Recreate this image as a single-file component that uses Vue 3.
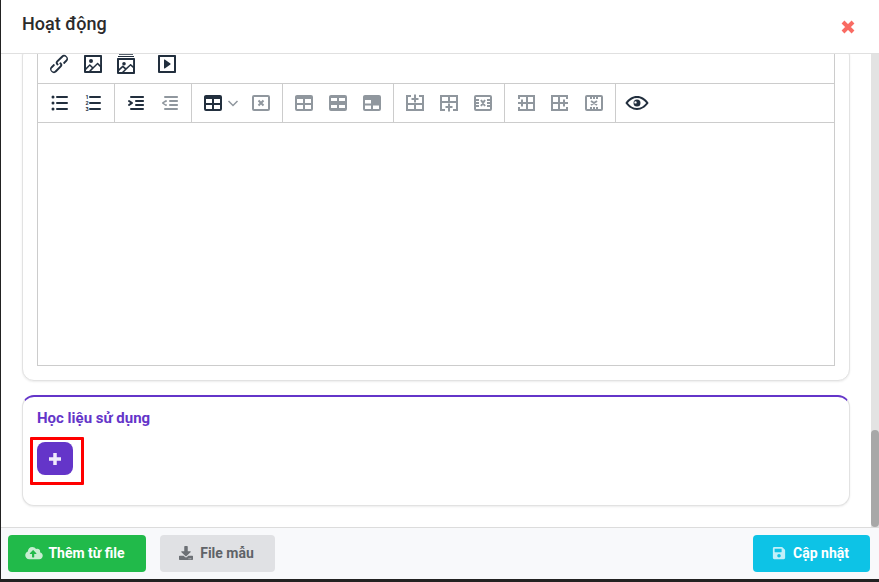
<script setup>
const tableD = 'M19 4a2 2 0 0 1 2 2v12a2 2 0 0 1-2 2H5a2 2 0 0 1-2-2V6c0-1.1.9-2 2-2h14zm0 10h-6v4h6v-4zm-8 0H5v4h6v-4zm8-6h-6v4h6V8zm-8 0H5v4h6V8z'
const solid = 'M5 4h14a2 2 0 0 1 2 2v12a2 2 0 0 1-2 2H5a2 2 0 0 1-2-2V6c0-1.1.9-2 2-2z'
const box = 'M5 5h14a1 1 0 0 1 1 1v12a1 1 0 0 1-1 1H5a1 1 0 0 1-1-1V6a1 1 0 0 1 1-1z'
const I = {
  link: { f: 'M6.2 12.3a1 1 0 0 1 1.4 1.4l-2 2a2 2 0 1 0 2.6 2.8l4.8-4.8a1 1 0 0 0 0-1.4 1 1 0 1 1 1.4-1.3 2.9 2.9 0 0 1 0 4L9.6 20a3.9 3.9 0 0 1-5.5-5.5l2-2zm11.6-.6a1 1 0 0 1-1.4-1.4l2-2a2 2 0 1 0-2.6-2.8L11 10a1 1 0 0 0 0 1.4 1 1 0 1 1-1.4 1.3 2.9 2.9 0 0 1 0-4L14.4 4a3.9 3.9 0 0 1 5.5 5.5l-2 2z' },
  image: { f: 'M5 15.7l3.3-3.2c.3-.3.7-.3 1 0L12 15l4.1-4c.3-.4.8-.4 1 0l2 1.9V5H5v10.7zM5 18v1h3l2.8-2.9-2-2L5 17.9zm14-3l-2.5-2.4-6.4 6.5H19v-4zM4 3h16c.6 0 1 .4 1 1v16c0 .6-.4 1-1 1H4a1 1 0 0 1-1-1V4c0-.6.4-1 1-1zm6 8a2 2 0 1 1 0-4 2 2 0 0 1 0 4z' },
  gallery: { f: 'M5 16.7l3.3-3c.3-.3.7-.3 1 0l2.7 2.4 4.1-3.8c.3-.4.8-.4 1 0l2 1.8V8H5v8.7zM5 19v1h3l2.8-2.7-2-1.9L5 19zm14-3l-2.5-2.3-6.4 6.3H19v-4zM4 6h16c.6 0 1 .4 1 1v14c0 .6-.4 1-1 1H4a1 1 0 0 1-1-1V7c0-.6.4-1 1-1zm6 7.5a1.8 1.8 0 1 1 0-3.6 1.8 1.8 0 0 1 0 3.6zM5 1.7h14v1.1H5zM4 3.9h16V5H4z' },
  media: { f: 'M4 3h16c.6 0 1 .4 1 1v16c0 .6-.4 1-1 1H4a1 1 0 0 1-1-1V4c0-.6.4-1 1-1zm1 2v14h14V5H5zm4.8 2.6l5.6 4a.5.5 0 0 1 0 .8l-5.6 4A.5.5 0 0 1 9 16V8a.5.5 0 0 1 .8-.4z' },
  ul: { f: 'M10 5h10a1 1 0 0 1 0 2H10a1 1 0 0 1 0-2zm0 6h10a1 1 0 0 1 0 2H10a1 1 0 0 1 0-2zm0 6h10a1 1 0 0 1 0 2H10a1 1 0 0 1 0-2zM6 4.500a1.500 1.500 0 1 1 0 3 1.500 1.500 0 0 1 0-3zm0 6a1.500 1.500 0 1 1 0 3 1.500 1.500 0 0 1 0-3zm0 6a1.500 1.500 0 1 1 0 3 1.500 1.500 0 0 1 0-3z' },
  ol: { f: 'M9 5h10a1 1 0 0 1 0 2H9a1 1 0 0 1 0-2zm0 6h10a1 1 0 0 1 0 2H9a1 1 0 0 1 0-2zm0 6h10a1 1 0 0 1 0 2H9a1 1 0 0 1 0-2z', digits: true },
  indent: { f: 'M7 5h12c.6 0 1 .4 1 1s-.4 1-1 1H7a1 1 0 1 1 0-2zm5 4h7c.6 0 1 .4 1 1s-.4 1-1 1h-7a1 1 0 0 1 0-2zm0 4h7c.6 0 1 .4 1 1s-.4 1-1 1h-7a1 1 0 0 1 0-2zm-5 4h12a1 1 0 0 1 0 2H7a1 1 0 0 1 0-2zm-2.6-3.8L6.2 12l-1.8-1.2a1 1 0 0 1 1.2-1.6l3 2a1 1 0 0 1 0 1.6l-3 2a1 1 0 1 1-1.2-1.6z' },
  outdent: { f: 'M7 5h12c.6 0 1 .4 1 1s-.4 1-1 1H7a1 1 0 1 1 0-2zm5 4h7c.6 0 1 .4 1 1s-.4 1-1 1h-7a1 1 0 0 1 0-2zm0 4h7c.6 0 1 .4 1 1s-.4 1-1 1h-7a1 1 0 0 1 0-2zm-5 4h12a1 1 0 0 1 0 2H7a1 1 0 0 1 0-2zm1.6-3.8a1 1 0 0 1-1.2 1.6l-3-2a1 1 0 0 1 0-1.6l3-2a1 1 0 0 1 1.2 1.6L5.8 12l1.8 1.2z' },
  table: { f: tableD },
  tdel: { s: box + 'M9.500 9.500l5 5M14.500 9.500l-5 5' },
  tcell: { f: tableD },
  trow: { f: solid + 'M5 7h6v3H5zM13 7h6v3h-6zM5 14h6v3H5zM13 14h6v3h-6z' },
  tprop: { f: solid + 'M5 9h6v3.500H5zM5 14.500h6V18H5zM13 14.500h6V18h-6z' },
  rowB: { s: 'M8 5H4v14h16V5h-4M4 13h16M12 13v6M12 3.500v8M8.500 8h7' },
  rowA: { s: 'M8 19H4V5h16v14h-4M4 11h16M12 5v6M12 12.500v8M8.500 16h7' },
  rowD: { s: box + 'M4 9h4M16 9h4M4 15h4M16 15h4M4 12h4M16 12h4M10 9l4 6M14 9l-4 6' },
  colB: { s: 'M5 8V5h15v14H5v-3M13 5v14M13 12h7M4 12h8M8 8.500v7' },
  colA: { s: 'M19 8V5H4v14h15v-3M11 5v14M4 12h7M12 12h8M16 8.500v7' },
  colD: { s: box + 'M9 5v3M15 5v3M9 16v3M15 16v3M12 5v3M12 16v3M9 10l6 4M15 10l-6 4' },
  eye: { f: 'M12 5c4.700 0 8.500 2.700 11.300 6.400a1 1 0 0 1 0 1.200C20.500 16.300 16.700 19 12 19S3.500 16.300.7 12.600a1 1 0 0 1 0-1.200C3.500 7.700 7.300 5 12 5zm0 2c-3.700 0-6.900 2-9.200 5 2.300 3 5.500 5 9.200 5s6.900-2 9.200-5c-2.300-3-5.500-5-9.200-5zm0 1.500a3.500 3.500 0 1 1 0 7 3.500 3.500 0 0 1 0-7zm-1.500 1.700a1.200 1.200 0 1 0 0 2.400 1.200 1.200 0 0 0 0-2.400z' }
}
const rowOne = [
  [{ k: 'link' }, { k: 'image' }, { k: 'gallery', nudge: true }],
  [{ k: 'media' }]
]
const rowTwo = [
  [{ k: 'ul' }, { k: 'ol' }],
  [{ k: 'indent' }, { k: 'outdent', off: true }],
  [{ k: 'table', split: true }, { k: 'tdel', off: true }],
  [{ k: 'tcell', off: true }, { k: 'trow', off: true }, { k: 'tprop', off: true }],
  [{ k: 'rowB', off: true }, { k: 'rowA', off: true }, { k: 'rowD', off: true }],
  [{ k: 'colB', off: true }, { k: 'colA', off: true }, { k: 'colD', off: true }],
  [{ k: 'eye' }]
]
const toolbars = [
  { cls: 'bar-one', groups: rowOne },
  { cls: 'bar-two', groups: rowTwo }
]
</script>

<template>
  <div class="page">
    <div class="modal">
      <header class="head">
        <h1 class="title">Hoạt động</h1>
        <svg class="close" width="14" height="14" viewBox="0 0 14 14" aria-hidden="true">
          <path d="M2 2l10 10M12 2L2 12" />
        </svg>
      </header>

      <div class="body">
        <main class="scroll">
          <section class="card card-editor">
            <div class="editor">
              <div v-for="bar in toolbars" :key="bar.cls" class="bar" :class="bar.cls">
                <div v-for="(group, gi) in bar.groups" :key="gi" class="group">
                  <span v-for="b in group" :key="b.k" class="tool" :class="{ off: b.off, split: b.split, nudge: b.nudge }">
                    <svg width="24" height="24" viewBox="0 0 24 24" aria-hidden="true">
                      <path v-if="I[b.k].f" class="fill" :d="I[b.k].f" />
                      <path v-if="I[b.k].s" class="line" :d="I[b.k].s" />
                      <template v-if="I[b.k].digits">
                        <text class="digit" x="4.500" y="8">1</text>
                        <text class="digit" x="4.500" y="14">2</text>
                        <text class="digit" x="4.500" y="20">3</text>
                      </template>
                    </svg>
                    <svg v-if="b.split" class="chev" width="12" height="24" viewBox="0 0 12 24" aria-hidden="true">
                      <path d="M1.500 10l4.500 4.500L10.500 10" />
                    </svg>
                  </span>
                </div>
              </div>
              <div class="area"></div>
            </div>
          </section>

          <section class="card card-files">
            <h2 class="sub">Học liệu sử dụng</h2>
            <div class="mark">
              <button class="add" type="button" aria-label="Thêm">
                <svg width="12" height="12" viewBox="0 0 12 12" aria-hidden="true">
                  <path d="M6 0v12M0 6h12" />
                </svg>
              </button>
            </div>
          </section>
        </main>
        <div class="track"><div class="thumb"></div></div>
      </div>

      <footer class="foot">
        <button class="btn green" type="button">
          <svg width="18" height="14" viewBox="0 0 640 512" aria-hidden="true"><path d="M537.6 226.6c4.100-10.700 6.400-22.400 6.400-34.600 0-53-43-96-96-96-19.700 0-38.100 6-53.300 16.200C367 64.200 315.300 32 256 32c-88.400 0-160 71.600-160 160 0 2.700.1 5.400.2 8.100C40.200 219.800 0 273.200 0 336c0 79.500 64.500 144 144 144h368c70.700 0 128-57.300 128-128 0-61.900-44-113.600-102.400-125.400zM393.400 288H328v112c0 8.800-7.200 16-16 16h-48c-8.800 0-16-7.200-16-16V288h-65.400c-14.300 0-21.400-17.200-11.300-27.300l105.400-105.400c6.200-6.200 16.400-6.200 22.600 0l105.400 105.400c10.100 10.100 2.900 27.300-11.300 27.300z" /></svg>
          Thêm từ file
        </button>
        <button class="btn gray" type="button">
          <svg width="14" height="14" viewBox="0 0 512 512" aria-hidden="true"><path d="M216 0h80c13.300 0 24 10.700 24 24v168h87.700c17.800 0 26.700 21.500 14.100 34.100L269.700 378.300c-7.500 7.500-19.800 7.500-27.300 0L90.100 226.100c-12.600-12.600-3.700-34.100 14.100-34.100H192V24c0-13.300 10.700-24 24-24zm296 376v112c0 13.300-10.700 24-24 24H24c-13.300 0-24-10.700-24-24V376c0-13.300 10.700-24 24-24h146.700l49 49c20.100 20.100 52.500 20.100 72.600 0l49-49H488c13.300 0 24 10.700 24 24zm-124 88c0-11-9-20-20-20s-20 9-20 20 9 20 20 20 20-9 20-20zm64 0c0-11-9-20-20-20s-20 9-20 20 9 20 20 20 20-9 20-20z" /></svg>
          File mẫu
        </button>
        <button class="btn cyan" type="button">
          <svg width="14" height="14" viewBox="0 0 448 512" aria-hidden="true"><path d="M433.941 129.941l-83.882-83.882A48 48 0 0 0 316.118 32H48C21.490 32 0 53.490 0 80v352c0 26.510 21.490 48 48 48h352c26.510 0 48-21.490 48-48V163.882a48 48 0 0 0-14.059-33.941zM224 416c-35.346 0-64-28.654-64-64 0-35.346 28.654-64 64-64s64 28.654 64 64c0 35.346-28.654 64-64 64zm96-304.520V212c0 6.627-5.373 12-12 12H76c-6.627 0-12-5.373-12-12V108c0-6.627 5.373-12 12-12h228.520c3.183 0 6.235 1.264 8.485 3.515l3.480 3.480A11.996 11.996 0 0 1 320 111.480z" /></svg>
          Cập nhật
        </button>
      </footer>
    </div>
  </div>
</template>

<style>
html, body { margin: 0; padding: 0; background: #222; }
</style>

<style scoped>
.page {
  width: 879px;
  height: 582px;
  background: #222;
  padding: 0 0 3px 1px;
  box-sizing: border-box;
  overflow: hidden;
  font-family: Roboto, "Liberation Sans", sans-serif;
}
.modal {
  height: 100%;
  background: #fff;
  display: flex;
  flex-direction: column;
}
.head {
  height: 47px;
  flex: none;
  border-bottom: 1px solid #e0e0e0;
  display: flex;
  align-items: center;
  justify-content: space-between;
  padding: 0 24px 6px 21px;
}
.title {
  margin: 0;
  font-size: 18px;
  font-weight: 500;
  color: #2b2b2b;
}
.close path {
  stroke: #f96b63;
  stroke-width: 4;
  fill: none;
}
.close { margin-top: 6px; }
.body {
  flex: 1;
  min-height: 0;
  display: flex;
}
.scroll {
  flex: 1;
  min-width: 0;
  overflow: hidden;
  padding: 0 21px;
}
.card {
  background: #fff;
  border: 1px solid #e2e2e2;
  border-radius: 12px;
  box-shadow: 0 1px 2px rgba(0, 0, 0, .08);
  box-sizing: border-box;
}
.card-editor {
  margin-top: -10px;
  padding: 0 14px 14px;
}
.editor {
  border: 1px solid #ccc;
  border-top: 0;
}
.bar {
  display: flex;
  height: 38px;
  border-bottom: 1px solid #ccc;
}
.bar-one .group { border-right: 0; padding: 0 2px 0 4px; }
.group {
  display: flex;
  align-items: center;
  padding: 0 4px;
  border-right: 1px solid #ccc;
}
.group:last-child { border-right: 0; }
.tool {
  display: flex;
  align-items: center;
  width: 34px;
  padding: 0 5px;
  box-sizing: border-box;
}
.tool.split { width: 48px; }
.tool svg { flex: none; }
.nudge svg { margin-left: -1px; }
.fill { fill: #222f3e; fill-rule: evenodd; }
.line { fill: none; stroke: #222f3e; stroke-width: 2; }
.digit { font: 700 5.500px Roboto, "Liberation Sans", sans-serif; fill: #222f3e; }
.off .fill, .off .line { opacity: .5; }
.chev { margin-left: 2px; }
.chev path { fill: none; stroke: #8f969e; stroke-width: 1.500; }
.area { height: 242px; }
.card-files {
  margin-top: 14px;
  height: 111px;
  border-top: 2px solid #6435c9;
  padding: 12px 14px 0;
}
.sub {
  margin: 0;
  font-size: 15px;
  line-height: 18px;
  font-weight: 700;
  color: #6435c9;
}
.mark {
  display: inline-flex;
  margin: 10px 0 0 -7px;
  padding: 2px 8px 7px 4px;
  border: 3px solid #f00;
  border-radius: 1px;
}
.add {
  width: 36px;
  height: 33px;
  padding: 0;
  border: 0;
  border-radius: 8px;
  background: #6435c9;
  display: flex;
  align-items: center;
  justify-content: center;
}
.add path { stroke: #efeafb; stroke-width: 3.500; fill: none; }
.track {
  width: 8px;
  flex: none;
  background: #e3e3e3;
  padding-top: 376px;
  box-sizing: border-box;
}
.thumb {
  height: 97px;
  background: #a8a8a8;
  border-radius: 4px;
}
.foot {
  flex: none;
  height: 52px;
  box-sizing: border-box;
  border-top: 1px solid #dcdcdc;
  background: #f8f9fb;
  padding: 7px 9px 7px 7px;
  display: flex;
  gap: 14px;
}
.btn {
  height: 37px;
  border: 0;
  border-radius: 4px;
  display: flex;
  align-items: center;
  justify-content: center;
  gap: 5px;
  padding: 0 0 2px;
  box-sizing: border-box;
  font: 700 14px Roboto, "Liberation Sans", sans-serif;
}
.btn svg { flex: none; }
.green { width: 138px; background: #21ba4a; color: #fff; padding-right: 4px; }
.green svg path, .cyan svg path { fill: #fff; opacity: .75; }
.gray { width: 115px; background: #e0e1e4; color: #5f6368; gap: 7px; padding-right: 2px; }
.gray svg path { fill: #6c7075; }
.cyan { width: 117px; margin-left: auto; background: #0dc3e6; color: #fff; padding-right: 2px; }
.cyan svg { margin-right: 2px; }
</style>
